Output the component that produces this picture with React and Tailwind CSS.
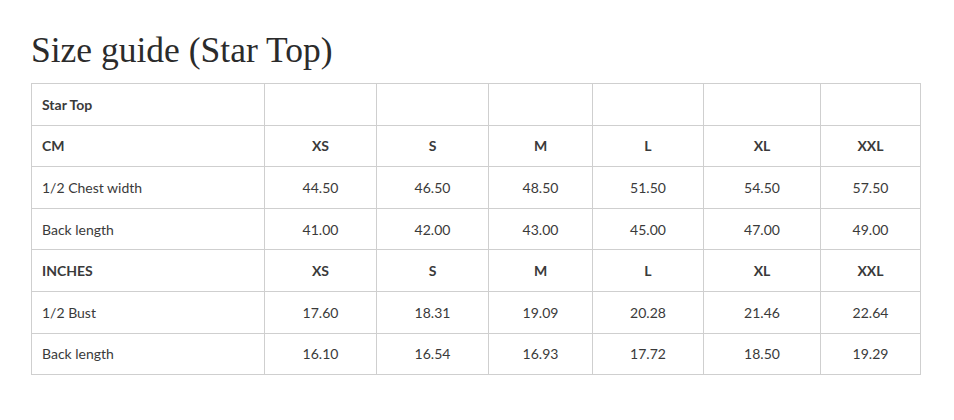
const SIZES = ["XS", "S", "M", "L", "XL", "XXL"];
const COLS = ["w-[112px]", "w-[112px]", "w-[104px]", "w-[111px]", "w-[117px]", "w-[100px]"];

const ROWS = [
  { label: "Star Top", bold: true, values: ["", "", "", "", "", ""] },
  { label: "CM", bold: true, values: SIZES },
  { label: "1/2 Chest width", values: ["44.50", "46.50", "48.50", "51.50", "54.50", "57.50"] },
  { label: "Back length", values: ["41.00", "42.00", "43.00", "45.00", "47.00", "49.00"] },
  { label: "INCHES", bold: true, values: SIZES },
  { label: "1/2 Bust", values: ["17.60", "18.31", "19.09", "20.28", "21.46", "22.64"] },
  { label: "Back length", values: ["16.10", "16.54", "16.93", "17.72", "18.50", "19.29"] },
];

export default function App() {
  return (
    <div className="w-[954px] h-[420px] bg-white pl-[31px] pt-[29px]">
      <h1 className="font-['Liberation_Serif',serif] text-[35.5px] leading-[42px] text-[#2b2b2b]">
        Size guide (Star Top)
      </h1>
      <table className="mt-[12px] border-collapse table-fixed w-[889px] font-['Lato',sans-serif] text-[14px] text-[#3a3a3a]">
        <colgroup>
          <col className="w-[233px]" />
          {COLS.map((c, i) => (
            <col key={i} className={c} />
          ))}
        </colgroup>
        <tbody>
          {ROWS.map((row, r) => (
            <tr key={r} className="h-[41.6px]">
              <td
                className={`border border-[#cfcfcf] pl-[10px] ${
                  row.bold ? "font-bold" : ""
                }`}
              >
                {row.label}
              </td>
              {row.values.map((v, i) => (
                <td
                  key={i}
                  className={`border border-[#cfcfcf] text-center ${
                    row.bold ? "font-bold" : ""
                  }`}
                >
                  {v}
                </td>
              ))}
            </tr>
          ))}
        </tbody>
      </table>
    </div>
  );
}
